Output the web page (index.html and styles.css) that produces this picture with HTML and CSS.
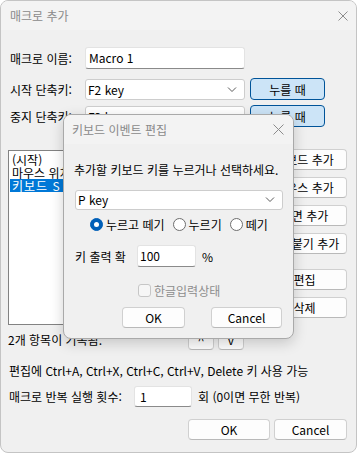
FILE: index.html
```html
<!DOCTYPE html>
<html lang="ko">
<head>
    <meta charset="utf-8">
    <title>매크로 추가</title>
    <link rel="stylesheet" href="styles.css">
</head>
<body>
<div class="window">
    <div class="titlebar">
        <span class="title">매크로 추가</span>
        <svg class="close" width="10" height="10" viewBox="0 0 10 10"><path d="M0.5 0.5L9.5 9.5M9.5 0.5L0.5 9.5" stroke="#8c8c8c" stroke-width="1"/></svg>
    </div>
    <div class="content">
        <div class="row row-name">
            <span class="label">매크로 이름:</span>
            <div class="edit name-edit">Macro 1</div>
        </div>
        <div class="row row-start">
            <span class="label">시작 단축키:</span>
            <div class="combo key-combo">F2 key
                <svg class="chevron" width="10" height="6" viewBox="0 0 10 6"><path d="M1 0.5L5 4.5L9 0.5" fill="none" stroke="#5a5a5a"/></svg>
            </div>
            <button class="btn btn-accent">누를 때</button>
        </div>
        <div class="row row-stop">
            <span class="label">중지 단축키:</span>
            <div class="combo key-combo">F3 key
                <svg class="chevron" width="10" height="6" viewBox="0 0 10 6"><path d="M1 0.5L5 4.5L9 0.5" fill="none" stroke="#5a5a5a"/></svg>
            </div>
            <button class="btn btn-accent">누를 때</button>
        </div>

        <div class="list-area">
            <div class="listbox">
                <div class="item">(시작)</div>
                <div class="item">마우스 위치 이동 (120, 240)</div>
                <div class="item selected">키보드 S key 누르고 떼기</div>
            </div>
            <div class="side-buttons">
                <button class="btn side">키보드 추가</button>
                <button class="btn side">마우스 추가</button>
                <button class="btn side">화면 추가</button>
                <button class="btn side">달라붙기 추가</button>
                <button class="btn side gap-top">편집</button>
                <button class="btn side">삭제</button>
            </div>
        </div>

        <div class="row row-count">
            <span class="count-label">2개 항목이 기록됨.</span>
            <button class="btn arrow">^</button>
            <button class="btn arrow">v</button>
        </div>

        <div class="hint">편집에 Ctrl+A, Ctrl+X, Ctrl+C, Ctrl+V, Delete 키 사용 가능</div>

        <div class="row row-repeat">
            <span class="repeat-label">매크로 반복 실행 횟수:</span>
            <div class="edit repeat-edit">1</div>
            <span class="repeat-note">회 (0이면 무한 반복)</span>
        </div>

        <div class="row row-actions">
            <button class="btn ok">OK</button>
            <button class="btn cancel">Cancel</button>
        </div>
    </div>

    <!-- modal on top of the main window -->
    <div class="dialog">
        <div class="titlebar dialog-titlebar">
            <span class="title">키보드 이벤트 편집</span>
            <svg class="close" width="11" height="11" viewBox="0 0 11 11"><path d="M0.5 0.5L10.5 10.5M10.5 0.5L0.5 10.5" stroke="#8c8c8c" stroke-width="1"/></svg>
        </div>
        <div class="dialog-body">
            <div class="prompt">추가할 키보드 키를 누르거나 선택하세요.</div>
            <div class="combo pkey-combo">P key
                <svg class="chevron" width="10" height="6" viewBox="0 0 10 6"><path d="M1 0.5L5 4.5L9 0.5" fill="none" stroke="#5a5a5a"/></svg>
            </div>
            <div class="radios">
                <span class="radio on"></span><span class="radio-text">누르고 떼기</span>
                <span class="radio"></span><span class="radio-text">누르기</span>
                <span class="radio"></span><span class="radio-text">떼기</span>
            </div>
            <div class="prob-row">
                <span class="prob-label">키 출력 확</span>
                <div class="edit prob-edit">100</div>
                <span class="percent">%</span>
            </div>
            <div class="check-row">
                <span class="checkbox"></span>
                <span class="check-text">한글입력상태</span>
            </div>
            <div class="dialog-actions">
                <button class="btn d-ok">OK</button>
                <button class="btn d-cancel">Cancel</button>
            </div>
        </div>
    </div>
</div>
</body>
</html>
```

FILE: styles.css
```css
* {
    box-sizing: border-box;
}
body {
    margin: 0;
    background: #ffffff;
    font-family: "Noto Sans CJK KR", "Noto Sans", sans-serif;
    font-size: 12px;
    color: #000;
}
.window {
    position: relative;
    width: 357px;
    height: 453px;
    background: #f0f0f0;
    border: 1px solid #c4c4c4;
    border-radius: 8px;
    overflow: hidden;
}
.titlebar {
    display: flex;
    align-items: center;
    justify-content: space-between;
    height: 29px;
    padding: 0 8px 0 9px;
    background: #f3f3f3;
}
.title {
    color: #8a8a8a;
    line-height: 16px;
}
.content {
    padding: 0 9px 0 7px;
}
.row {
    display: flex;
    align-items: center;
}
.label {
    width: 77px;
    padding-left: 2px;
}
.edit {
    height: 22px;
    line-height: 20px;
    padding-left: 3px;
    background: #fff;
    border: 1px solid #e3e3e3;
    border-bottom-color: #8a8a8a;
    border-radius: 3px;
}
.combo {
    position: relative;
    height: 21px;
    line-height: 19px;
    padding-left: 2px;
    background: #fff;
    border: 1px solid #cdcdcd;
    border-radius: 3px;
}
.chevron {
    position: absolute;
    right: 7px;
    top: 7px;
}
.btn {
    height: 21px;
    padding: 0;
    font-family: inherit;
    font-size: 12px;
    color: #000;
    background: #fdfdfd;
    border: 1px solid #d0d0d0;
    border-bottom-color: #b9b9b9;
    border-radius: 4px;
}
.btn-accent {
    width: 75px;
    height: 22px;
    margin-left: 5px;
    background: #cce4f7;
    border: 1px solid #005499;
}
.row-name {
    margin-top: 17px;
}
.name-edit {
    width: 160px;
}
.row-start {
    margin-top: 9px;
}
.row-stop {
    margin-top: 5px;
}
.key-combo {
    width: 160px;
}
.list-area {
    display: flex;
    justify-content: space-between;
    margin-top: 22px;
}
.listbox {
    width: 247px;
    height: 175px;
    margin-top: 1px;
    padding: 2px 1px;
    background: #fff;
    border: 1px solid #828282;
}
.item {
    height: 13px;
    line-height: 13px;
    padding-left: 2px;
    white-space: nowrap;
    overflow: hidden;
}
.item.selected {
    background: #0078d7;
    color: #fff;
    letter-spacing: 1px;
}
.side-buttons {
    display: flex;
    flex-direction: column;
    gap: 7px;
}
.side {
    width: 85px;
}
.gap-top {
    margin-top: 8px;
}
.row-count {
    margin-top: 4px;
}
.count-label {
    width: 180px;
}
.arrow {
    width: 26px;
    margin-right: 4px;
}
.hint {
    margin-top: 13px;
    height: 16px;
    line-height: 16px;
    padding-left: 1px;
}
.row-repeat {
    margin-top: 7px;
}
.repeat-label {
    width: 126px;
    padding-left: 1px;
}
.repeat-edit {
    width: 58px;
    height: 21px;
    padding-left: 5px;
}
.repeat-note {
    margin-left: 6px;
}
.row-actions {
    justify-content: flex-end;
    gap: 4px;
    margin-top: 12px;
}
.ok {
    width: 82px;
}
.cancel {
    width: 73px;
}

/* keyboard event dialog */
.dialog {
    position: absolute;
    left: 62px;
    top: 113px;
    width: 231px;
    height: 225px;
    background: #f0f0f0;
    border: 1px solid #a9a9a9;
    border-radius: 8px;
    box-shadow: 0 4px 14px rgba(0, 0, 0, 0.18);
    overflow: hidden;
}
.dialog-titlebar {
    padding: 0 9px 0 8px;
}
.dialog-body {
    padding: 0 10px;
}
.prompt {
    margin-top: 18px;
    height: 16px;
    line-height: 16px;
    white-space: nowrap;
}
.pkey-combo {
    width: 208px;
    height: 20px;
    line-height: 18px;
    margin: 12px 0 0 1px;
}
.pkey-combo .chevron {
    top: 6px;
}
.radios {
    display: flex;
    align-items: center;
    height: 14px;
    margin-top: 7px;
    padding-left: 16px;
}
.radio {
    position: relative;
    width: 13px;
    height: 13px;
    border: 1px solid #6e6e6e;
    border-radius: 50%;
    background: #fff;
}
.radio.on {
    background: #005fb8;
    border-color: #005fb8;
}
.radio.on::after {
    content: "";
    position: absolute;
    left: 3px;
    top: 3px;
    width: 5px;
    height: 5px;
    border-radius: 50%;
    background: #fff;
}
.radio-text {
    margin: 0 8px 0 3px;
}
.prob-row {
    display: flex;
    align-items: center;
    margin-top: 14px;
}
.prob-label {
    width: 63px;
    padding-left: 1px;
}
.prob-edit {
    width: 59px;
    padding-left: 2px;
}
.percent {
    margin-left: 6px;
}
.check-row {
    display: flex;
    align-items: center;
    height: 13px;
    margin-top: 17px;
    padding-left: 64px;
}
.checkbox {
    width: 13px;
    height: 13px;
    background: #f6f6f6;
    border: 1px solid #c6c6c6;
    border-radius: 3px;
}
.check-text {
    margin-left: 3px;
    color: #8d8d8d;
}
.dialog-actions {
    display: flex;
    margin-top: 10px;
    padding-left: 48px;
}
.d-ok {
    width: 63px;
}
.d-cancel {
    width: 71px;
    margin-left: 26px;
}
```
